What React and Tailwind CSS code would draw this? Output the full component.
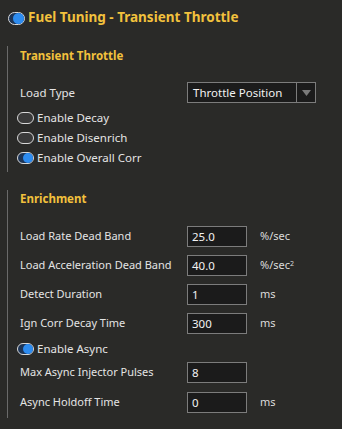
import React from 'react';

const Toggle = ({ on }) => (
  <div
    className={`relative w-[17px] h-[12px] rounded-full border border-[#d8d8d8] ${
      on ? 'bg-[#1d3557]' : 'bg-[#3a3a3a]'
    }`}
  >
    {on && (
      <div className="absolute right-[0px] top-[0px] w-[10px] h-[10px] rounded-full bg-[#2d8cf0]" />
    )}
  </div>
);

const ToggleRow = ({ on, label, className = '' }) => (
  <div className={`flex items-center gap-[3px] h-[20px] -ml-[3px] ${className}`}>
    <Toggle on={on} />
    <span className="text-[11.5px] text-[#e4e4e4]">{label}</span>
  </div>
);

const InputRow = ({ label, value, unit, className = '' }) => (
  <div className={`flex items-center h-[21px] ${className}`}>
    <span className="w-[167px] text-[11px] text-[#e4e4e4]">{label}</span>
    <div className="w-[60px] h-[21px] border border-[#7c7c7c] bg-[#1b1b1b] flex items-center px-[4px] text-[11.5px] text-[#f2f2f2]">
      {value}
    </div>
    {unit && <span className="ml-[13px] text-[11px] text-[#dcdcdc]">{unit}</span>}
  </div>
);

const SectionTitle = ({ children }) => (
  <div className="h-[16px] flex items-center text-[11.5px] font-bold text-[#f2c13d]">{children}</div>
);

export default function App() {
  return (
    <div
      className="w-[342px] h-[429px] bg-[#2a2a28] overflow-hidden"
      style={{ fontFamily: '"Noto Sans", "Open Sans", sans-serif' }}
    >
      {/* header */}
      <div className="flex items-center gap-[3px] h-[36px] pl-[8px]">
        <div className="relative w-[17px] h-[13px] rounded-full border border-[#d8d8d8] bg-[#1d3557]">
          <div className="absolute right-[0px] top-[0px] w-[11px] h-[11px] rounded-full bg-[#2d8cf0]" />
        </div>
        <span className="text-[13.5px] font-bold text-[#f2c13d] leading-none">
          Fuel Tuning - Transient Throttle
        </span>
      </div>

      {/* Transient Throttle group */}
      <div className="ml-[7px] mt-[10px] h-[126px] border-l border-[#6a6a6a] pl-[12px] pt-[2px]">
        <SectionTitle>Transient Throttle</SectionTitle>
        <div className="flex items-center h-[21px] mt-[18px]">
          <span className="w-[167px] text-[11.5px] text-[#e4e4e4]">Load Type</span>
          <div className="w-[129px] h-[21px] border border-[#7c7c7c] bg-[#1b1b1b] flex">
            <div className="flex-1 flex items-center px-[5px] text-[11.5px] text-[#f2f2f2]">
              Throttle Position
            </div>
            <div className="w-[19px] border-l border-[#7c7c7c] flex items-center justify-center">
              <svg width="9" height="6" viewBox="0 0 9 6">
                <path d="M0 0 H9 L4.5 6 Z" fill="#7a7a7a" />
              </svg>
            </div>
          </div>
        </div>
        <ToggleRow on={false} label="Enable Decay" className="mt-[5px]" />
        <ToggleRow on={false} label="Enable Disenrich" />
        <ToggleRow on={true} label="Enable Overall Corr" />
      </div>

      {/* Enrichment group */}
      <div className="ml-[7px] mt-[18px] h-[228px] border-l border-[#6a6a6a] pl-[12px] pt-[1px]">
        <SectionTitle>Enrichment</SectionTitle>
        <InputRow label="Load Rate Dead Band" value="25.0" unit="%/sec" className="mt-[19px]" />
        <InputRow
          label="Load Acceleration Dead Band"
          value="40.0"
          unit={
            <>
              %/sec<sup className="text-[7px]">2</sup>
            </>
          }
          className="mt-[8px]"
        />
        <InputRow label="Detect Duration" value="1" unit="ms" className="mt-[8px]" />
        <InputRow label="Ign Corr Decay Time" value="300" unit="ms" className="mt-[8px]" />
        <ToggleRow on={true} label="Enable Async" className="mt-[5px]" />
        <InputRow label="Max Async Injector Pulses" value="8" className="mt-[3px]" />
        <InputRow label="Async Holdoff Time" value="0" unit="ms" className="mt-[9px]" />
      </div>
    </div>
  );
}
